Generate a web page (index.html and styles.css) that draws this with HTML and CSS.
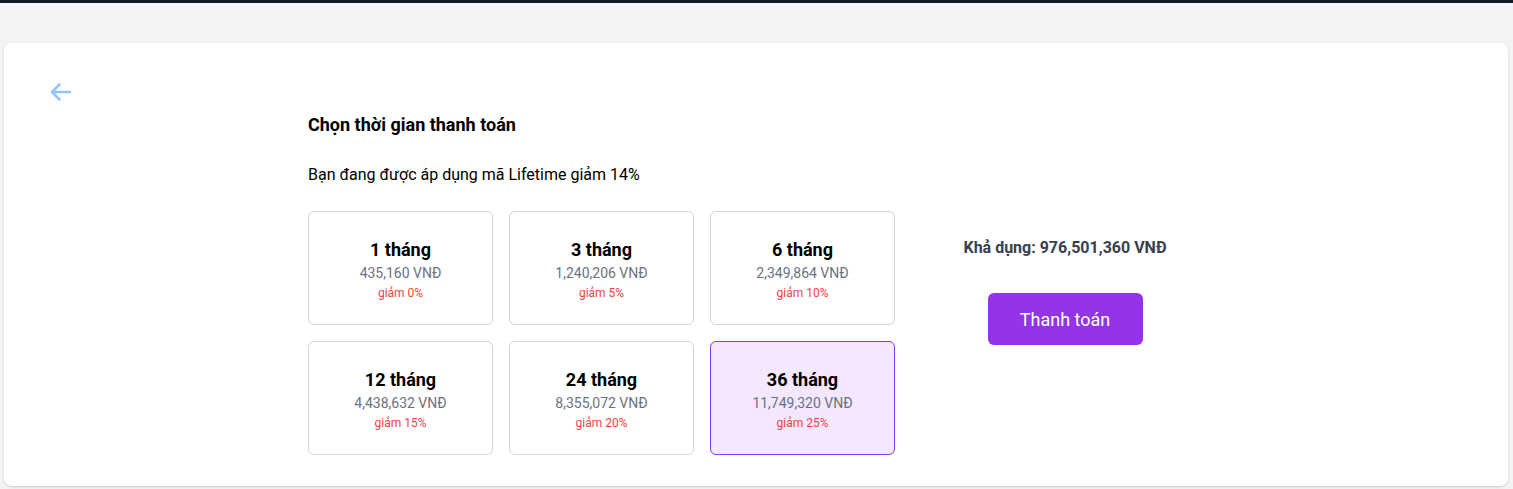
FILE: index.html
```html
<!DOCTYPE html>
<html lang="vi">
<head>
<meta charset="utf-8">
<title>Chọn thời gian thanh toán</title>
<link rel="stylesheet" href="styles.css">
</head>
<body>
<div class="topbar"></div>
<main class="page">
  <section class="card">
    <div class="back">
      <svg width="24" height="24" viewBox="0 0 24 24" fill="none" stroke="currentColor" stroke-width="2.5" stroke-linecap="round" stroke-linejoin="round"><path d="M10.5 19.5L3 12m0 0l7.5-7.5M3 12h18"/></svg>
    </div>
    <div class="content">
      <h1 class="title">Chọn thời gian thanh toán</h1>
      <p class="subtitle">Bạn đang được áp dụng mã Lifetime giảm 14%</p>
      <div class="layout">
        <div class="plans">
          <div class="plan"><div class="plan-name">1 tháng</div><div class="plan-price">435,160 VNĐ</div><div class="plan-off">giảm 0%</div></div>
          <div class="plan"><div class="plan-name">3 tháng</div><div class="plan-price">1,240,206 VNĐ</div><div class="plan-off">giảm 5%</div></div>
          <div class="plan"><div class="plan-name">6 tháng</div><div class="plan-price">2,349,864 VNĐ</div><div class="plan-off">giảm 10%</div></div>
          <div class="plan"><div class="plan-name">12 tháng</div><div class="plan-price">4,438,632 VNĐ</div><div class="plan-off">giảm 15%</div></div>
          <div class="plan"><div class="plan-name">24 tháng</div><div class="plan-price">8,355,072 VNĐ</div><div class="plan-off">giảm 20%</div></div>
          <div class="plan selected"><div class="plan-name">36 tháng</div><div class="plan-price">11,749,320 VNĐ</div><div class="plan-off">giảm 25%</div></div>
        </div>
        <div class="summary">
          <div class="balance">Khả dụng: 976,501,360 VNĐ</div>
          <button class="pay">Thanh toán</button>
        </div>
      </div>
    </div>
  </section>
</main>
</body>
</html>
```
FILE: styles.css
```css
* { box-sizing: border-box; }
html, body { margin: 0; padding: 0; }
body {
  background: #f3f4f6;
  font-family: Roboto, "Noto Sans", Arial, sans-serif;
  color: #000;
  height: 489px;
  overflow: hidden;
}
.topbar { height: 3px; background: #111827; }
.page { padding: 40px 5px 0 4px; }
.card {
  background: #fff;
  border-radius: 8px;
  box-shadow: 0 1px 3px rgba(0,0,0,0.12), 0 1px 2px rgba(0,0,0,0.06);
  padding: 37px 45px 31px;
}
.back { color: #93c5fd; height: 24px; display: flex; }
.content { padding-left: 259px; }
.title { margin: 9px 0 0; font-size: 18px; font-weight: 700; line-height: 24px; }
.subtitle { margin: 26px 0 0; font-size: 16px; line-height: 24px; }
.layout { display: flex; margin-top: 24px; }
.plans {
  display: grid;
  grid-template-columns: repeat(3, 185px);
  grid-auto-rows: 114px;
  gap: 16px;
}
.plan {
  border: 1px solid #d1d5db;
  border-radius: 6px;
  display: flex;
  flex-direction: column;
  align-items: center;
  justify-content: center;
  padding-top: 4px;
}
.plan.selected { background: #f3e8ff; border-color: #9333ea; }
.plan-name { font-size: 18px; font-weight: 700; line-height: 24px; }
.plan-price { font-size: 14px; color: #6b7280; line-height: 20px; margin-top: 1px; }
.plan-off { font-size: 12px; color: #ef4444; line-height: 20px; }
.summary {
  width: 242px;
  margin-left: 49px;
  padding-top: 25px;
  display: flex;
  flex-direction: column;
  align-items: center;
}
.balance { font-size: 16px; font-weight: 700; color: #374151; line-height: 24px; }
.pay {
  margin-top: 33px;
  width: 155px;
  height: 52px;
  border: 0;
  border-radius: 6px;
  background: #9333ea;
  color: #fff;
  font-family: inherit;
  font-size: 18px;
}
```
